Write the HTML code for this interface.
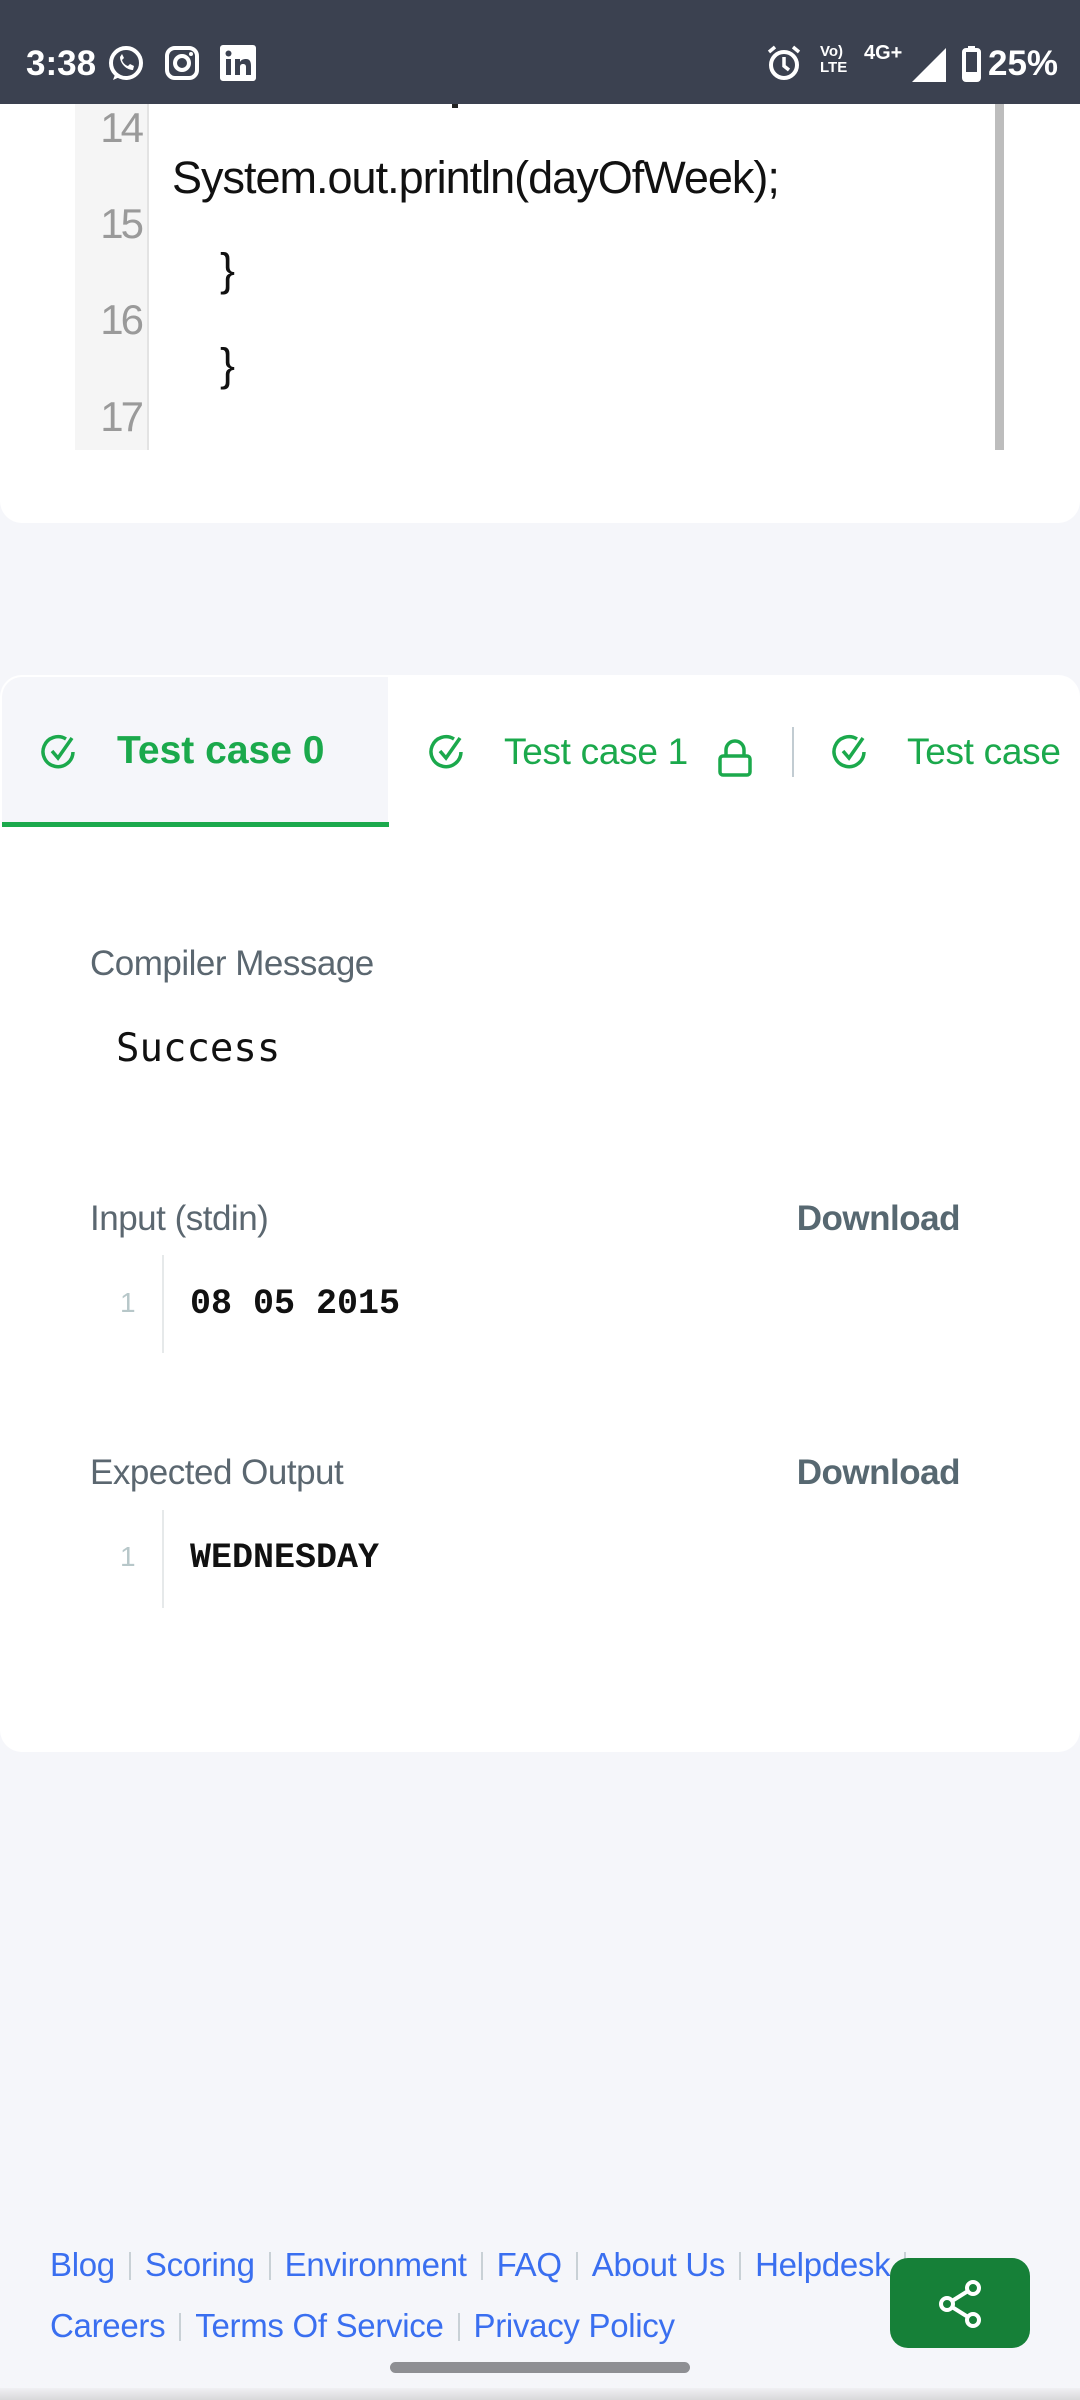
<!DOCTYPE html>
<html><head><meta charset="utf-8"><style>
*{margin:0;padding:0;box-sizing:border-box}
body{width:1080px;height:2400px;background:#f5f6fa;position:relative;overflow:hidden;font-family:"Liberation Sans",sans-serif}
.a{position:absolute;white-space:nowrap}
.sb{position:absolute;left:0;top:0;width:1080px;height:104px;background:#3b4150;color:#fff}
.card1{position:absolute;left:0;top:104px;width:1080px;height:419px;background:#fff;border-radius:0 0 22px 22px}
.gut{position:absolute;left:75px;top:104px;width:74px;height:346px;background:#f5f5f5;border-right:2px solid #e3e3e3}
.ln{position:absolute;left:75px;width:66px;text-align:right;color:#9a9a9a;font-size:42px;letter-spacing:-3px}
.code{position:absolute;font-size:45px;color:#111;letter-spacing:-1px}
.card2{position:absolute;left:0;top:675px;width:1080px;height:1077px;background:#fff;border-radius:22px}
.lbl{position:absolute;left:90px;font-size:35px;color:#5b6770;letter-spacing:-0.5px}
.dl{position:absolute;right:120px;font-size:35px;font-weight:bold;color:#576871;letter-spacing:-0.5px}
.tg{color:#1ba94c}
.ft{position:absolute;font-size:33px;color:#3a6ff0;letter-spacing:-0.3px}
.sep{display:inline-block;width:2px;height:28px;background:#c9d1d6;margin:0 14px;vertical-align:-4px}
</style></head><body>
<div class="sb">
 <div class="a" style="left:26px;top:44px;font-size:35px;font-weight:bold">3:38</div>
 <svg class="a" style="left:106px;top:44px" width="40" height="40" viewBox="0 0 40 40"><circle cx="20" cy="19" r="15" fill="none" stroke="#fff" stroke-width="4"/><path d="M7 36 L10 28 L16 32 Z" fill="#fff"/><path d="M14 13c0 6 6 13 13 13l1-4-4-2-2 2c-3-1-5-3-6-6l2-2-2-4z" fill="#fff"/></svg>
 <svg class="a" style="left:164px;top:45px" width="36" height="36" viewBox="0 0 36 36"><rect x="3" y="3" width="30" height="30" rx="8" fill="none" stroke="#fff" stroke-width="4"/><circle cx="18" cy="18" r="7" fill="none" stroke="#fff" stroke-width="4"/><circle cx="27" cy="9" r="2" fill="#fff"/></svg>
 <svg class="a" style="left:220px;top:45px" width="36" height="36" viewBox="0 0 36 36"><rect width="36" height="36" rx="3" fill="#fff"/><rect x="6" y="14" width="5" height="16" fill="#3b4150"/><circle cx="8.5" cy="8.5" r="3" fill="#3b4150"/><path d="M15 14h5v3c1-2 3-3 6-3 4 0 5 3 5 7v9h-5v-8c0-2-1-3-3-3s-3 1-3 3v8h-5z" fill="#3b4150"/></svg>
 <svg class="a" style="left:766px;top:44px" width="36" height="38" viewBox="0 0 36 38"><circle cx="18" cy="21" r="13" fill="none" stroke="#fff" stroke-width="4"/><path d="M18 13v9l5 4" stroke="#fff" stroke-width="3.5" fill="none"/><path d="M3 8l6-5M33 8l-6-5" stroke="#fff" stroke-width="3.5"/></svg>
 <div class="a" style="left:820px;top:44px;font-size:15px;font-weight:bold;line-height:16px">Vo)<br>LTE</div>
 <div class="a" style="left:864px;top:42px;font-size:20px;font-weight:bold">4G+</div>
 <svg class="a" style="left:912px;top:48px" width="34" height="34"><path d="M0 34L34 0V34Z" fill="#fff"/></svg>
 <svg class="a" style="left:962px;top:46px" width="20" height="36"><rect x="2" y="4" width="15" height="30" rx="2" fill="none" stroke="#fff" stroke-width="4"/><rect x="6" y="0" width="7" height="5" fill="#fff"/><rect x="4" y="26" width="11" height="7" fill="#fff"/></svg>
 <div class="a" style="left:988px;top:44px;font-size:35px;font-weight:bold">25%</div>
</div>
<div class="card1"></div>
<div class="gut"></div>
<div class="a" style="left:452px;top:104px;width:6px;height:4px;background:#222"></div>
<div class="ln" style="top:104px">14</div>
<div class="ln" style="top:200px">15</div>
<div class="ln" style="top:296px">16</div>
<div class="ln" style="top:393px">17</div>
<div class="code" style="left:172px;top:152px">System.out.println(dayOfWeek);</div>
<div class="code" style="left:220px;top:244px">}</div>
<div class="code" style="left:220px;top:339px">}</div>
<div class="a" style="left:995px;top:104px;width:9px;height:346px;background:#bdbdbd"></div>

<div class="card2"></div>
<div class="a" style="left:2px;top:677px;width:386px;height:150px;background:#f5f6fa;border-radius:20px 0 0 0"></div>
<div class="a" style="left:2px;top:822px;width:387px;height:5px;background:#1ba94c"></div>
<svg class="a" style="left:40px;top:733px" width="38" height="38" viewBox="0 0 38 38"><path d="M33 19A15 15 0 1 1 26 6" fill="none" stroke="#1ba94c" stroke-width="3.5"/><path d="M12 18l6 7 14-20" fill="none" stroke="#1ba94c" stroke-width="3.5"/></svg>
<div class="a tg" style="left:117px;top:729px;font-size:39px;font-weight:bold;letter-spacing:0px">Test case 0</div>
<svg class="a" style="left:428px;top:733px" width="38" height="38" viewBox="0 0 38 38"><path d="M33 19A15 15 0 1 1 26 6" fill="none" stroke="#1ba94c" stroke-width="3.5"/><path d="M12 18l6 7 14-20" fill="none" stroke="#1ba94c" stroke-width="3.5"/></svg>
<div class="a tg" style="left:504px;top:731px;font-size:37px;letter-spacing:-0.3px">Test case 1</div>
<svg class="a" style="left:716px;top:738px" width="38" height="40" viewBox="0 0 38 40"><rect x="4" y="18" width="30" height="19" rx="3" fill="none" stroke="#1ba94c" stroke-width="3.5"/><path d="M10 18V12a9 9 0 0 1 18 0v6" fill="none" stroke="#1ba94c" stroke-width="3.5"/></svg>
<div class="a" style="left:792px;top:727px;width:2px;height:50px;background:#c2ccd2"></div>
<svg class="a" style="left:831px;top:733px" width="38" height="38" viewBox="0 0 38 38"><path d="M33 19A15 15 0 1 1 26 6" fill="none" stroke="#1ba94c" stroke-width="3.5"/><path d="M12 18l6 7 14-20" fill="none" stroke="#1ba94c" stroke-width="3.5"/></svg>
<div class="a tg" style="left:907px;top:731px;font-size:37px;letter-spacing:-0.3px">Test case</div>

<div class="lbl" style="top:944px">Compiler Message</div>
<div class="a" style="left:116px;top:1026px;font-family:'DejaVu Sans Mono',monospace;font-size:39px;color:#111">Success</div>

<div class="lbl" style="top:1199px">Input (stdin)</div>
<div class="dl" style="top:1199px">Download</div>
<div class="a" style="left:120px;top:1287px;font-size:28px;color:#b7c7c9">1</div>
<div class="a" style="left:162px;top:1255px;width:2px;height:98px;background:#e6e9ea"></div>
<div class="a" style="left:190px;top:1284px;font-family:'Liberation Mono',monospace;font-weight:bold;font-size:35px;color:#111">08 05 2015</div>

<div class="lbl" style="top:1453px">Expected Output</div>
<div class="dl" style="top:1453px">Download</div>
<div class="a" style="left:120px;top:1541px;font-size:28px;color:#b7c7c9">1</div>
<div class="a" style="left:162px;top:1510px;width:2px;height:98px;background:#e6e9ea"></div>
<div class="a" style="left:190px;top:1538px;font-family:'Liberation Mono',monospace;font-weight:bold;font-size:35px;color:#111">WEDNESDAY</div>

<div class="ft" style="left:50px;top:2246px">Blog<span class="sep"></span>Scoring<span class="sep"></span>Environment<span class="sep"></span>FAQ<span class="sep"></span>About Us<span class="sep"></span>Helpdesk<span class="sep"></span></div>
<div class="ft" style="left:50px;top:2307px">Careers<span class="sep"></span>Terms Of Service<span class="sep"></span>Privacy Policy</div>
<div class="a" style="left:890px;top:2258px;width:140px;height:90px;background:#168038;border-radius:18px"></div>
<svg class="a" style="left:935px;top:2278px" width="52" height="52" viewBox="0 0 52 52"><circle cx="38" cy="10" r="6" fill="none" stroke="#fff" stroke-width="4"/><circle cx="12" cy="26" r="6" fill="none" stroke="#fff" stroke-width="4"/><circle cx="38" cy="42" r="6" fill="none" stroke="#fff" stroke-width="4"/><path d="M17 23l16-10M17 29l16 10" stroke="#fff" stroke-width="4"/></svg>
<div class="a" style="left:390px;top:2362px;width:300px;height:11px;border-radius:6px;background:#8e8f93"></div>
<div class="a" style="left:0;top:2388px;width:1080px;height:12px;background:linear-gradient(#f0f0f3,#d8d8da)"></div>
</body></html>
